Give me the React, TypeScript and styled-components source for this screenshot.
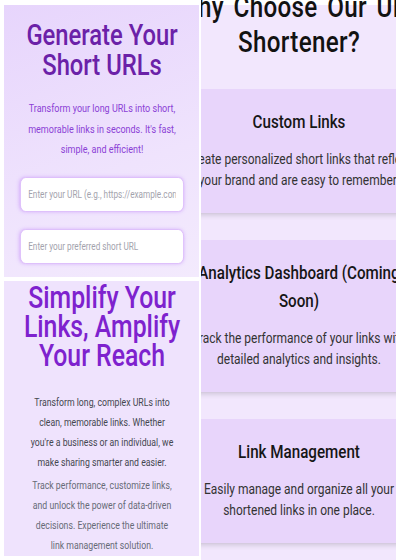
import React from "react";
import styled, { createGlobalStyle } from "styled-components";

const Global = createGlobalStyle`
  html, body { margin: 0; padding: 0; background: #ffffff; }
  body { font-family: Roboto, "Liberation Sans", sans-serif; }
  #root { width: 400px; height: 560px; }
`;

const Collage = styled.div`
  width: 400px;
  height: 560px;
  box-sizing: border-box;
  padding-left: 4px;
  display: grid;
  grid-template-columns: 195px 195px;
  column-gap: 2px;
  background: #ffffff;
  overflow: hidden;
`;

const LeftColumn = styled.div`
  display: flex;
  flex-direction: column;
  gap: 4px;
  padding-top: 5px;
`;

const Panel = styled.section<{ $h: number; $bg: string }>`
  height: ${(p) => p.$h}px;
  overflow: hidden;
  display: flex;
  justify-content: center;
  align-items: flex-start;
  background: ${(p) => p.$bg};
`;

const Stage = styled.div<{ $w: number; $s: number }>`
  flex: none;
  width: ${(p) => p.$w}px;
  box-sizing: border-box;
  transform: scaleX(${(p) => p.$s});
  transform-origin: center top;
  text-align: center;
`;

/* ---------- top-left: generator ---------- */
const Generator = styled(Stage)`
  padding: 15px 19px 0;
  display: flex;
  flex-direction: column;
`;

const GenTitle = styled.h1`
  margin: 0;
  font-family: Roboto, sans-serif;
  font-weight: 500;
  font-size: 29px;
  line-height: 30px;
  color: #6b21a8;
`;

const GenLead = styled.p`
  margin: 19px 0 0;
  font-size: 11px;
  line-height: 20.5px;
  color: #8b3fd6;
`;

const Fields = styled.div`
  margin-top: 16px;
  display: flex;
  flex-direction: column;
  gap: 17px;
`;

const Field = styled.input`
  width: 100%;
  height: 35px;
  box-sizing: border-box;
  border: 1.5px solid #dcbcfb;
  border-radius: 7px;
  background: #ffffff;
  box-shadow: 0 0 4px rgba(168, 85, 247, 0.35);
  padding: 0 9px;
  font-family: Roboto, sans-serif;
  font-size: 10px;
  color: #333;
  outline: none;
  &::placeholder { color: #a3a3ad; }
`;

/* ---------- bottom-left: intro ---------- */
const Intro = styled(Stage)`
  padding-top: 2px;
  display: flex;
  flex-direction: column;
  align-items: center;
`;

const IntroTitle = styled.h2`
  margin: 0;
  font-family: Roboto, sans-serif;
  font-weight: 500;
  font-size: 31px;
  line-height: 29px;
  color: #7e22ce;
`;

const IntroText = styled.p<{ $tone: "dark" | "soft"; $gap: number }>`
  margin: ${(p) => p.$gap}px 0 0;
  max-width: 183px;
  font-size: 10.9px;
  line-height: 20px;
  color: ${(p) => (p.$tone === "dark" ? "#44474f" : "#676b77")};
`;

/* ---------- right: features ---------- */
const Features = styled(Stage)`
  display: flex;
  flex-direction: column;
`;

const FeatTitle = styled.h2`
  margin: -10px 0 0;
  font-family: Roboto, sans-serif;
  font-weight: 500;
  font-size: 29.5px;
  line-height: 35px;
  letter-spacing: 0.4px;
  word-spacing: 4px;
  color: #121212;
`;

const CardList = styled.div`
  margin-top: 29px;
  display: flex;
  flex-direction: column;
  gap: 27px;
`;

const Card = styled.article`
  background: #e8d5fb;
  padding: 19px 12px 22px;
  border-radius: 8px;
  box-shadow: 0 4px 6px -1px rgba(0, 0, 0, 0.1), 0 2px 4px -1px rgba(0, 0, 0, 0.06);
`;

const CardTitle = styled.h3`
  margin: 0 0 13px;
  font-weight: 500;
  font-size: 18.5px;
  line-height: 28px;
  color: #161616;
`;

const CardText = styled.p`
  margin: 0;
  font-size: 14.6px;
  line-height: 21px;
  color: #333333;
`;

const features = [
  {
    title: "Custom Links",
    text: "Create personalized short links that reflect your brand and are easy to remember.",
  },
  {
    title: "Analytics Dashboard (Coming Soon)",
    text: "Track the performance of your links with detailed analytics and insights.",
  },
  {
    title: "Link Management",
    text: "Easily manage and organize all your shortened links in one place.",
  },
];

export default function App() {
  return (
    <>
      <Global />
      <Collage>
        <LeftColumn>
          <Panel $h={272} $bg="linear-gradient(160deg, #e7d5fc 0%, #efe3fd 60%, #f3eafd 100%)">
            <Generator $w={238} $s={0.82}>
              <GenTitle>Generate Your Short URLs</GenTitle>
              <GenLead>
                Transform your long URLs into short, memorable links in seconds. It's fast,
                simple, and efficient!
              </GenLead>
              <Fields>
                <Field placeholder="Enter your URL (e.g., https://example.com)" />
                <Field placeholder="Enter your preferred short URL" />
              </Fields>
            </Generator>
          </Panel>
          <Panel $h={275} $bg="#efe3fd">
            <Intro $w={244} $s={0.8}>
              <IntroTitle>Simplify Your Links, Amplify Your Reach</IntroTitle>
              <IntroText $tone="dark" $gap={23}>
                Transform long, complex URLs into clean, memorable links. Whether you're a
                business or an individual, we make sharing smarter and easier.
              </IntroText>
              <IntroText $tone="soft" $gap={3}>
                Track performance, customize links, and unlock the power of data-driven
                decisions. Experience the ultimate link management solution.
              </IntroText>
            </Intro>
          </Panel>
        </LeftColumn>
        <Panel $h={560} $bg="linear-gradient(#ffffff 0 5px, #f2e7fd 5px)">
          <Features $w={320} $s={0.82}>
            <FeatTitle>Why Choose Our URL Shortener?</FeatTitle>
            <CardList>
              {features.map((f) => (
                <Card key={f.title}>
                  <CardTitle>{f.title}</CardTitle>
                  <CardText>{f.text}</CardText>
                </Card>
              ))}
            </CardList>
          </Features>
        </Panel>
      </Collage>
    </>
  );
}
